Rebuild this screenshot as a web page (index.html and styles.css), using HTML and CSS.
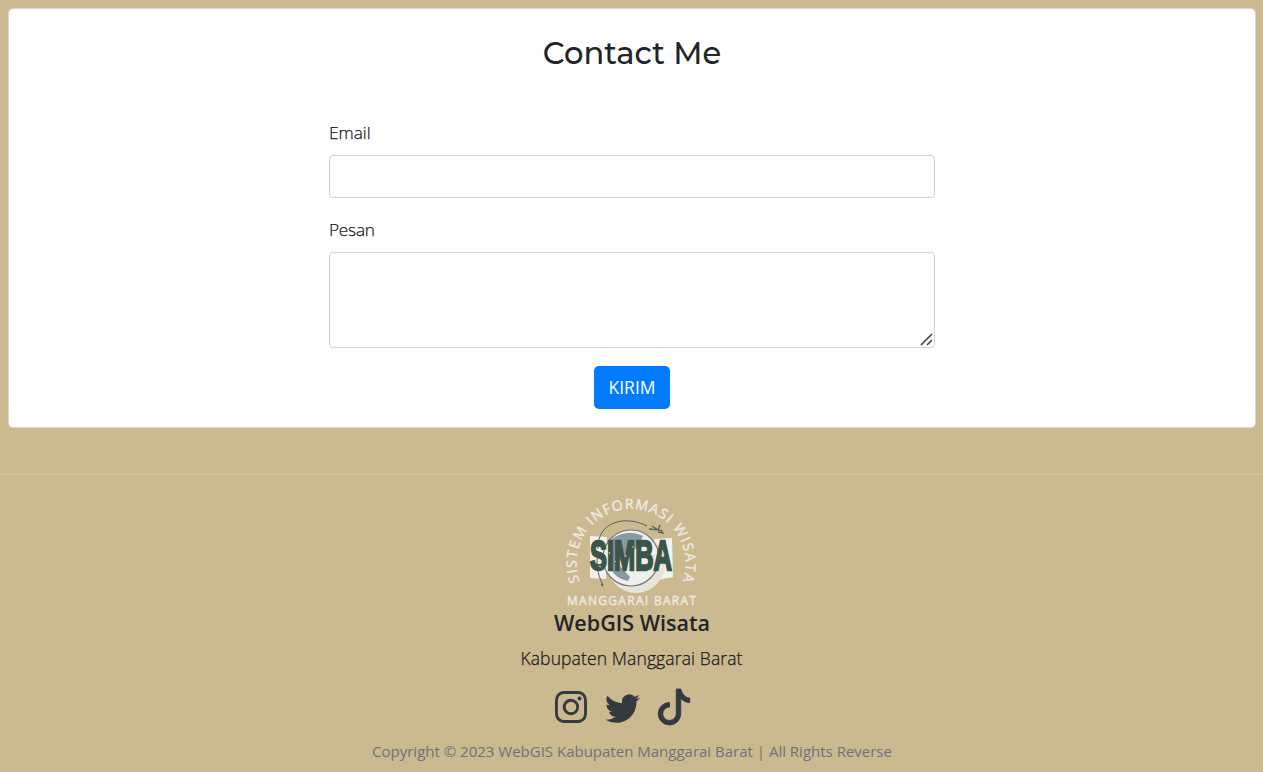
FILE: index.html
```html
<!DOCTYPE html>
<html lang="id">
<head>
<meta charset="utf-8">
<title>WebGIS Wisata</title>
<link rel="stylesheet" href="styles.css">
</head>
<body>
<main class="card">
  <h2 class="title">Contact Me</h2>
  <form class="form">
    <label class="label" for="email"><span class="t-email">Email</span></label>
    <input class="control" id="email" type="email">
    <label class="label" for="pesan"><span class="t-pesan">Pesan</span></label>
    <div class="area-wrap">
      <textarea class="control area" id="pesan"></textarea>
      <svg class="grip" viewBox="0 0 13 13"><path d="M1 12L12 1M7 12l5-5" fill="none" stroke="#444" stroke-width="1.600"/></svg>
    </div>
    <button class="btn" type="button"><span class="t-btn">KIRIM</span></button>
  </form>
</main>
<footer class="footer">
  <svg class="logo" viewBox="0 0 160 130" width="160" height="130" role="img" aria-label="SIMBA">
    <defs><path id="ring" d="M29.6 96.5A54.5 54.5 0 1 1 132.4 96.5"/></defs>
    <path d="M40 51l17 1-1 42-16-1zM104 54l18-1 1 39-15 3z" fill="#f3f2ec"/>
    <circle cx="86" cy="79" r="29" fill="#e9e4d8"/>
    <circle cx="81" cy="73" r="28" fill="#f0efec" stroke="#687b80" stroke-width="1.2"/>
    <path d="M61 55c8-8 23-9 32-4l-6 12c-11 5-18 9-17 18l10 11-2 4c-10-2-18-8-19-20z" fill="#8799a5"/>
    <path d="M48 64C47 36 76 30 97 41M48 66c-2 12-1 23 5 34" fill="none" stroke="#52645f"/>
    <path d="M99 44l12 1 2 3-5-1M102 41l6 4 2-5M51 99l2 2" fill="none" stroke="#52645f" stroke-width="1.3"/>
    <text class="logo-name" x="40" y="84.500" textLength="82" lengthAdjust="spacingAndGlyphs">SIMBA</text>
    <g class="logo-text">
      <text textLength="207" lengthAdjust="spacing"><textPath href="#ring" textLength="207">SISTEM INFORMASI WISATA</textPath></text>
      <text class="logo-base" x="17" y="119.500" textLength="129" lengthAdjust="spacing">MANGGARAI BARAT</text>
    </g>
    <path d="M59 67l1 2M65 76l1 1M76 70v2M103 72l2-2M96 87l3-2M112 65l2 5M49 81l2 1M83 61v2" stroke="#c9d0c8" stroke-width="1"/>
  </svg>
  <h4 class="brand"><span class="t-brand">WebGIS Wisata</span></h4>
  <p class="region"><span class="t-region">Kabupaten Manggarai Barat</span></p>
  <div class="social">
    <svg class="icon ig" viewBox="0 0 16 16"><path d="M8 0C5.829 0 5.556.01 4.703.048 3.850.088 3.269.222 2.760.420a3.917 3.917 0 0 0-1.417.923A3.927 3.927 0 0 0 .420 2.760C.222 3.268.087 3.850.048 4.700.010 5.555 0 5.827 0 8.001c0 2.172.010 2.444.048 3.297.040.852.174 1.433.372 1.942.205.526.478.972.923 1.417.444.445.890.719 1.416.923.510.198 1.090.333 1.942.372C5.555 15.990 5.827 16 8 16s2.444-.010 3.298-.048c.851-.040 1.434-.174 1.943-.372a3.916 3.916 0 0 0 1.416-.923c.445-.445.718-.891.923-1.417.197-.509.332-1.090.372-1.942C15.990 10.445 16 10.173 16 8s-.010-2.445-.048-3.299c-.040-.851-.175-1.433-.372-1.941a3.926 3.926 0 0 0-.923-1.417A3.911 3.911 0 0 0 13.240.420c-.510-.198-1.092-.333-1.943-.372C10.443.010 10.172 0 7.998 0zm-.717 1.442h.718c2.136 0 2.389.007 3.232.046.780.035 1.204.166 1.486.275.373.145.640.319.920.599s.453.546.598.920c.110.281.240.705.275 1.485.039.843.047 1.096.047 3.231s-.008 2.389-.047 3.232c-.035.780-.166 1.203-.275 1.485a2.470 2.470 0 0 1-.599.919c-.280.280-.546.453-.920.598-.280.110-.704.240-1.485.276-.843.038-1.096.047-3.232.047s-2.390-.009-3.233-.047c-.780-.036-1.203-.166-1.485-.276a2.478 2.478 0 0 1-.920-.598 2.480 2.480 0 0 1-.600-.920c-.109-.281-.240-.705-.275-1.485-.038-.843-.046-1.096-.046-3.233s.008-2.388.046-3.231c.036-.780.166-1.204.276-1.486.145-.373.319-.640.599-.920s.546-.453.920-.598c.282-.110.705-.240 1.485-.276.738-.034 1.024-.044 2.515-.045zm4.988 1.328a.960.960 0 1 0 0 1.920.960.960 0 0 0 0-1.920zm-4.270 1.122a4.109 4.109 0 1 0 0 8.217 4.109 4.109 0 0 0 0-8.217zm0 1.441a2.667 2.667 0 1 1 0 5.334 2.667 2.667 0 0 1 0-5.334"/></svg>
    <svg class="icon tw" viewBox="0 0 16 16"><path d="M5.026 15c6.038 0 9.341-5.003 9.341-9.334 0-.140 0-.282-.006-.422A6.685 6.685 0 0 0 16 3.542a6.658 6.658 0 0 1-1.889.518 3.301 3.301 0 0 0 1.447-1.817 6.533 6.533 0 0 1-2.087.793A3.286 3.286 0 0 0 7.875 6.030a9.325 9.325 0 0 1-6.767-3.429 3.289 3.289 0 0 0 1.018 4.382A3.323 3.323 0 0 1 .640 6.575v.045a3.288 3.288 0 0 0 2.632 3.218 3.203 3.203 0 0 1-.865.115 3.230 3.230 0 0 1-.614-.057 3.283 3.283 0 0 0 3.067 2.277A6.588 6.588 0 0 1 .780 13.580a6.320 6.320 0 0 1-.780-.045A9.344 9.344 0 0 0 5.026 15z"/></svg>
    <svg class="icon tt" viewBox="0 0 16 16"><path d="M9 0h1.980c.144.715.540 1.617 1.235 2.512C12.895 3.389 13.797 4 15 4v2c-1.753 0-3.070-.814-4-1.829V11a5 5 0 1 1-5-5v2a3 3 0 1 0 3 3z" stroke="#343a40" stroke-width=".400"/></svg>
  </div>
  <p class="copy"><span class="t-copy">Copyright © 2023 WebGIS Kabupaten Manggarai Barat | All Rights Reverse</span></p>
</footer>
</body>
</html>
```
FILE: styles.css
```css
* { box-sizing: border-box; }
body {
  margin: 0;
  height: 772px;
  overflow: hidden;
  background: #cbb98f;
  color: #212529;
  font: 400 17px/27px "Segoe UI", "Open Sans", "Noto Sans", sans-serif;
}
.card {
  height: 420px;
  margin: 8px 7px 0 8px;
  padding-top: 24px;
  background: #fff;
  border: 1px solid #d9d5ca;
  border-radius: 5px;
}
.title {
  margin: 0;
  text-align: center;
  font: 500 30.600px/40px Montserrat, Inter, sans-serif;
}
.form {
  display: flex;
  flex-direction: column;
  width: 606px;
  margin: 46px auto 0;
}
.label { height: 36px; font-size: 17.200px; font-weight: 300; color: #17191b; -webkit-text-stroke: 0.250px #17191b; }
.t-pesan { letter-spacing: -0.200px; }
.control {
  display: block;
  width: 100%;
  height: 43px;
  margin: 0 0 18px;
  padding: 7px 13px;
  background: #fff;
  border: 1px solid #ced4da;
  border-radius: 4px;
  font: inherit;
}
.area-wrap { position: relative; }
.area { height: 96px; resize: none; }
.grip { position: absolute; right: 2px; top: 81px; width: 13px; height: 13px; }
.btn {
  align-self: center;
  width: 76px;
  height: 43px;
  padding: 0;
  color: #fff;
  background: #007bff;
  border: 0;
  border-radius: 5px;
  font: inherit;
  font-size: 17.500px;
}
.footer {
  display: flex;
  flex-direction: column;
  align-items: center;
  margin-top: 45px;
  padding-top: 10px;
  border-top: 2px solid #d1c29f;
}
.logo { flex: none; margin-left: -3px; }
.logo-name { font: 700 42px "Liberation Sans Narrow", "Liberation Sans", sans-serif; fill: #3b5548; stroke: #3b5548; stroke-width: 2.400px; }
.logo-text { font: 400 14px "Liberation Sans Narrow", "Open Sans", sans-serif; fill: #eeeae2; stroke: #eeeae2; stroke-width: 0.400px; }
.logo-base { font-size: 12px; }
.brand { margin: -7px 0 0 1px; font-size: 21.500px; font-weight: 600; line-height: 30px; }
.region { margin: 7px 0 0; font-size: 17.500px; font-weight: 300; letter-spacing: 0.120px; color: #17191b; -webkit-text-stroke: 0.250px #17191b; }
.social { display: flex; align-items: center; height: 38px; margin: 16px 16px 0 0; }
.icon { flex: none; fill: #343a40; }
.ig { width: 32px; height: 32px; }
.tw { width: 35px; height: 35px; margin-left: 18px; }
.tt { width: 36px; height: 36px; margin-left: 16px; overflow: visible; }
.copy { margin: 12px 0 0 1px; font-size: 15px; color: #6c757d; }
.t-email, .t-pesan, .t-btn, .t-brand, .t-region, .t-copy { white-space: nowrap; }
```
